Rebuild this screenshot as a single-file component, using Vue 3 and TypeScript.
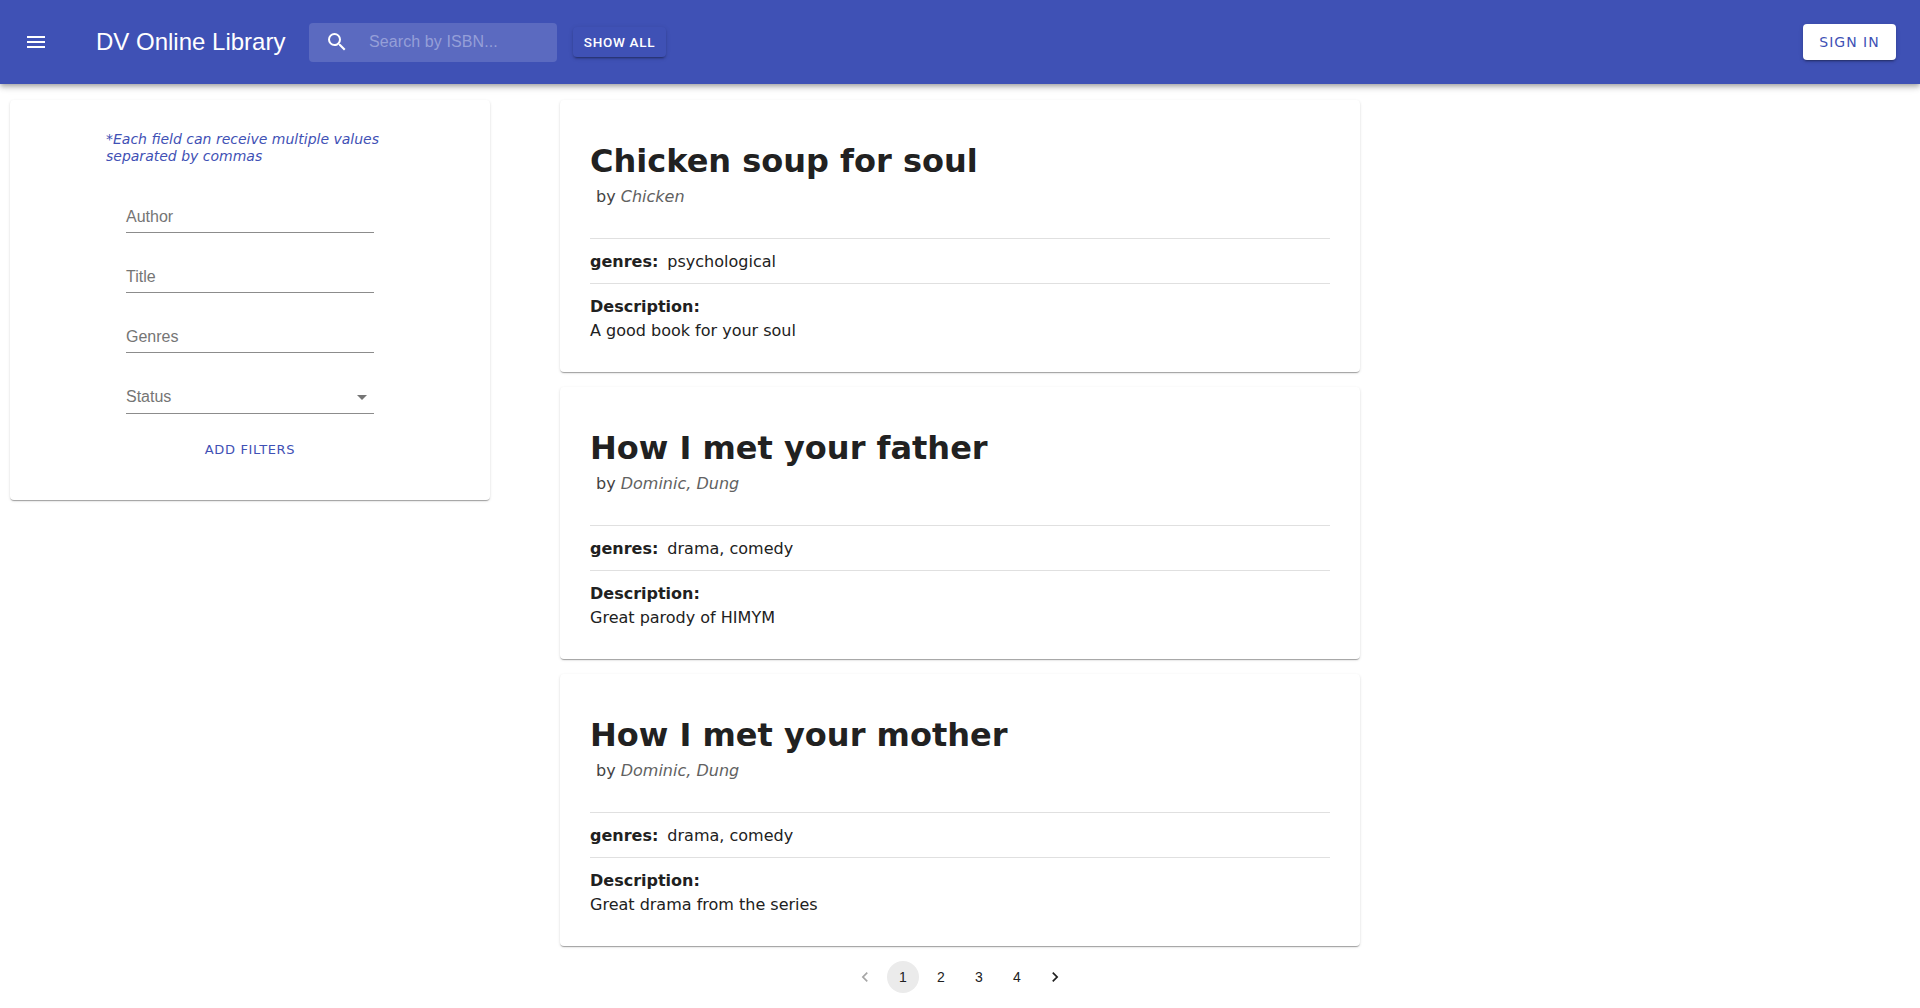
<script setup lang="ts">
interface Book { title: string; author: string; genres: string; description: string }
const books: Book[] = [
  { title: 'Chicken soup for soul', author: 'Chicken', genres: 'psychological', description: 'A good book for your soul' },
  { title: 'How I met your father', author: 'Dominic, Dung', genres: 'drama, comedy', description: 'Great parody of HIMYM' },
  { title: 'How I met your mother', author: 'Dominic, Dung', genres: 'drama, comedy', description: 'Great drama from the series' },
]
const fields = ['Author', 'Title', 'Genres']
const pages = [1, 2, 3, 4]
</script>

<template>
  <div class="page">
    <header class="appbar">
      <button class="menu" aria-label="menu">
        <svg viewBox="0 0 24 24" width="24" height="24"><path fill="#fff" d="M3 18h18v-2H3v2zm0-5h18v-2H3v2zm0-7v2h18V6H3z" /></svg>
      </button>
      <h1 class="brand">DV Online Library</h1>
      <div class="search">
        <svg viewBox="0 0 24 24" width="24" height="24"><path fill="#fff" d="M15.5 14h-.79l-.28-.27A6.471 6.471 0 0 0 16 9.5 6.5 6.5 0 1 0 9.5 16c1.61 0 3.09-.59 4.23-1.57l.27.28v.79l5 4.99L20.49 19l-4.99-5zm-6 0C7.01 14 5 11.99 5 9.5S7.01 5 9.5 5 14 7.01 14 9.5 11.99 14 9.5 14z" /></svg>
        <span class="search-text">Search by ISBN...</span>
      </div>
      <button class="show-all">SHOW ALL</button>
      <button class="sign-in">SIGN IN</button>
    </header>

    <div class="content">
      <aside class="filters">
        <p class="note">*Each field can receive multiple values<br />separated by commas</p>
        <div v-for="f in fields" :key="f" class="field"><span>{{ f }}</span></div>
        <div class="field select">
          <span>Status</span>
          <svg viewBox="0 0 24 24" width="24" height="24"><path fill="#757575" d="M7 10l5 5 5-5z" /></svg>
        </div>
        <button class="add">ADD FILTERS</button>
      </aside>

      <main class="list">
        <article v-for="b in books" :key="b.title" class="card">
          <h2 class="title">{{ b.title }}</h2>
          <p class="by">by <em>{{ b.author }}</em></p>
          <hr class="rule first" />
          <p class="genres"><b>genres:</b><span>{{ b.genres }}</span></p>
          <hr class="rule" />
          <p class="desc-label">Description:</p>
          <p class="desc">{{ b.description }}</p>
        </article>
        <nav class="pager">
          <span class="pg"><svg viewBox="0 0 24 24" width="20" height="20"><path fill="#a6a6a6" d="M15.41 7.41L14 6l-6 6 6 6 1.41-1.41L10.83 12z" /></svg></span>
          <span v-for="p in pages" :key="p" class="pg" :class="{ active: p === 1 }">{{ p }}</span>
          <span class="pg"><svg viewBox="0 0 24 24" width="20" height="20"><path fill="#212121" d="M10 6L8.59 7.41 13.17 12l-4.58 4.59L10 18l6-6z" /></svg></span>
        </nav>
      </main>
    </div>
  </div>
</template>

<style>
html, body { margin: 0; background: #fff; }
</style>

<style scoped>
.page { font-family: "DejaVu Sans", Verdana, sans-serif; color: #212121; height: 1008px; overflow: hidden; }
button { font: inherit; border: 0; cursor: pointer; }
.appbar {
  height: 84px; background: #3f51b5; display: flex; align-items: center; padding: 0 24px;
  box-shadow: 0 2px 4px -1px rgba(0,0,0,.2), 0 4px 5px rgba(0,0,0,.14), 0 1px 10px rgba(0,0,0,.12);
  position: relative; box-sizing: border-box;
}
.menu { background: none; padding: 0; width: 24px; height: 24px; margin-right: 48px; display: flex; flex: none; }
.brand { margin: 0 24px 0 0; font: 400 24px/1.6 "Liberation Sans", Arial, sans-serif; color: #fff; white-space: nowrap; width: 189px; flex: none; }
.search {
  width: 248px; height: 39px; background: rgba(255,255,255,.15); border-radius: 4px; flex: none;
  display: flex; align-items: center; padding-left: 16px; box-sizing: border-box; margin-right: 16px;
}
.search-text { font: 16px "Liberation Sans", Arial, sans-serif; letter-spacing: .1px; color: #959fd8; margin-left: 20px; }
.show-all {
  width: 93px; height: 30px; padding: 0; border-radius: 4px; background: #3f51b5; color: #fff; flex: none;
  font: 500 13.5px "Roboto", sans-serif; letter-spacing: .7px;
  box-shadow: 0 3px 1px -2px rgba(0,0,0,.2), 0 2px 2px rgba(0,0,0,.14), 0 1px 5px rgba(0,0,0,.12);
}
.sign-in {
  margin-left: auto; width: 93px; height: 36px; padding: 0; border-radius: 4px; background: #fff; color: #3f51b5; flex: none;
  font-size: 14px; letter-spacing: 1px;
  box-shadow: 0 3px 1px -2px rgba(0,0,0,.2), 0 2px 2px rgba(0,0,0,.14), 0 1px 5px rgba(0,0,0,.12);
}
.content { display: flex; padding: 16px 0 0 10px; align-items: flex-start; }
.filters {
  width: 480px; height: 400px; box-sizing: border-box; background: #fff; border-radius: 4px; margin-right: 70px;
  padding: 31px 0 0 96px;
  box-shadow: 0 2px 1px -1px rgba(0,0,0,.2), 0 1px 1px rgba(0,0,0,.14), 0 1px 3px rgba(0,0,0,.12);
}
.note { margin: 0 0 35px; font-size: 14px; line-height: 17px; font-style: italic; color: #3f51b5; white-space: nowrap; }
.field {
  width: 248px; height: 32px; margin: 0 0 27px 20px; border-bottom: 1px solid #8c8c8c; display: flex; align-items: center;
  justify-content: space-between; font: 16px "Liberation Sans", Arial, sans-serif; color: #757575;
}
.field span { padding-top: 2px; }
.select { margin-bottom: 0; height: 33px; }
.select span { padding-top: 0; }
.add {
  display: block; width: 248px; margin: 28px 0 0 20px; padding: 0; background: none; color: #3f51b5;
  font-size: 13px; letter-spacing: .65px; text-align: center;
}
.list { width: 800px; display: flex; flex-direction: column; }
.card {
  height: 272px; box-sizing: border-box; margin-bottom: 15px; padding: 39px 30px 0; background: #fff; border-radius: 4px;
  box-shadow: 0 2px 1px -1px rgba(0,0,0,.2), 0 1px 1px rgba(0,0,0,.14), 0 1px 3px rgba(0,0,0,.12);
}
.title { margin: 0; font-size: 32px; line-height: 44px; font-weight: 700; }
.by { margin: 2px 0 0 6px; font-size: 16px; line-height: 24px; color: #424242; }
.by em { color: #616161; }
.rule { border: 0; height: 1px; background: #e0e0e0; margin: 0; }
.rule.first { margin-top: 29px; }
.genres { margin: 0; height: 44px; display: flex; align-items: center; font-size: 16px; }
.genres b { margin-right: 9px; }
.desc-label { margin: 11px 0 0; font-weight: 700; font-size: 16px; line-height: 24px; }
.desc { margin: 0; font-size: 16px; line-height: 24px; }
.pager { display: flex; justify-content: center; gap: 6px; }
.pg {
  width: 32px; height: 32px; border-radius: 50%; display: flex; align-items: center; justify-content: center;
  font: 14px "Liberation Sans", Arial, sans-serif; color: #212121;
}
.pg.active { background: #ebebeb; }
</style>
